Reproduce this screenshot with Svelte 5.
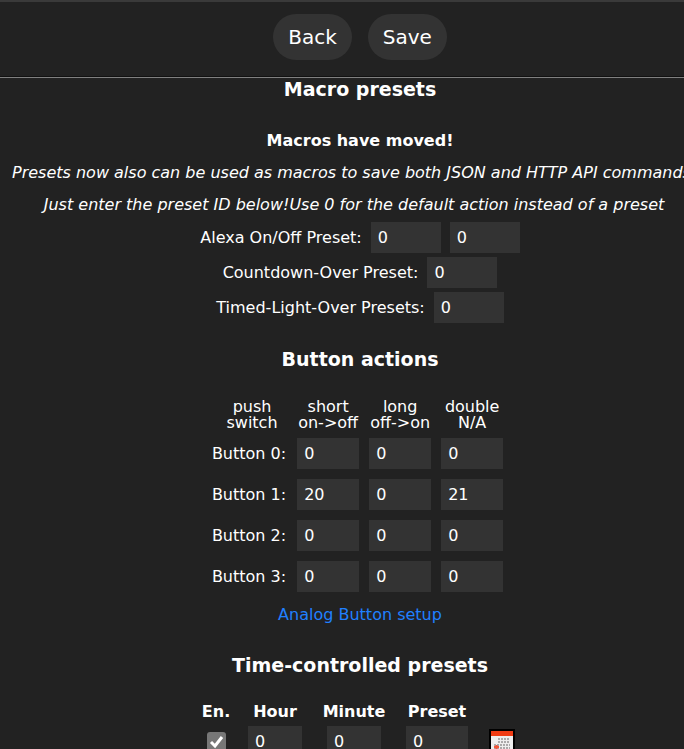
<script lang="ts">
  let alexaOn = $state('0');
  let alexaOff = $state('0');
  let countdown = $state('0');
  let timedLight = $state('0');

  let buttons = $state([
    ['0', '0', '0'],
    ['20', '0', '21'],
    ['0', '0', '0'],
    ['0', '0', '0']
  ]);
  const actions = ['short', 'long', 'double'];

  let timer = $state({ enabled: true, hour: '0', minute: '0', preset: '0' });
</script>

<div class="page">
  <main>
    <div class="toolbar">
      <button type="button">Back</button>
      <button type="button">Save</button>
    </div>

    <h2 class="first">Macro presets</h2>
    <p><b>Macros have moved!</b></p>
    <p class="note"><i>Presets now also can be used as macros to save both JSON and HTTP API commands.</i></p>
    <p class="note"><i>Just enter the preset ID below!</i><i>Use 0 for the default action instead of a preset</i></p>

    <div class="fields">
      <div class="field">
        <label for="alexa-on">Alexa On/Off Preset:</label>
        <input id="alexa-on" type="text" inputmode="numeric" bind:value={alexaOn} />
        <input type="text" inputmode="numeric" aria-label="Alexa Off preset" bind:value={alexaOff} />
      </div>
      <div class="field">
        <label for="countdown">Countdown-Over Preset:</label>
        <input id="countdown" type="text" inputmode="numeric" bind:value={countdown} />
      </div>
      <div class="field">
        <label for="timed-light">Timed-Light-Over Presets:</label>
        <input id="timed-light" type="text" inputmode="numeric" bind:value={timedLight} />
      </div>
    </div>

    <h2>Button actions</h2>
    <table class="buttons">
      <thead>
        <tr>
          <th>push<br />switch</th>
          <th>short<br />on-&gt;off</th>
          <th>long<br />off-&gt;on</th>
          <th>double<br />N/A</th>
        </tr>
      </thead>
      <tbody>
        {#each buttons as row, i}
          <tr>
            <td class="name">Button {i}:</td>
            {#each row as _, j}
              <td>
                <input
                  type="text"
                  inputmode="numeric"
                  aria-label="Button {i} {actions[j]}"
                  bind:value={buttons[i][j]}
                />
              </td>
            {/each}
          </tr>
        {/each}
      </tbody>
    </table>
    <a href="#analog">Analog Button setup</a>

    <h2>Time-controlled presets</h2>
    <table class="timers">
      <thead>
        <tr>
          <th class="enabled">En.</th>
          <th class="time">Hour</th>
          <th class="time">Minute</th>
          <th class="preset">Preset</th>
          <td class="days"></td>
        </tr>
      </thead>
      <tbody>
        <tr>
          <td><input type="checkbox" aria-label="Enabled" bind:checked={timer.enabled} /></td>
          <td><input class="small" type="text" inputmode="numeric" aria-label="Hour" bind:value={timer.hour} /></td>
          <td><input class="small" type="text" inputmode="numeric" aria-label="Minute" bind:value={timer.minute} /></td>
          <td><input type="text" inputmode="numeric" aria-label="Preset" bind:value={timer.preset} /></td>
          <td>
            <button type="button" class="calendar" aria-label="Select days">
              <svg width="26" height="26" viewBox="0 0 26 26">
                <rect width="26" height="26" fill="#000" />
                <rect x="2" y="2" width="22" height="22" fill="#eee" />
                <rect x="2" y="2" width="22" height="5" fill="#f03c14" />
                <path
                  d="M9 10h12M9 13h12M5 16h16M5 19h16"
                  stroke="#aaa"
                  stroke-width="2"
                  stroke-dasharray="2 1"
                />
                <path d="M5 18h5M7.500 16v4" stroke="#f0553a" stroke-width="2" />
              </svg>
            </button>
          </td>
        </tr>
      </tbody>
    </table>
  </main>
</div>

<style>
  :global(body) {
    background: #222;
  }

  .page {
    height: 100vh;
    overflow: hidden;
    box-sizing: border-box;
    border-top: 2px solid #3a3a3a;
    background: #222;
    color: #fff;
    font: 16px/16px Verdana, "DejaVu Sans", sans-serif;
  }

  main {
    width: max-content;
    min-width: 100%;
    box-sizing: border-box;
    display: flex;
    flex-direction: column;
    align-items: center;
  }

  .toolbar {
    align-self: stretch;
    display: flex;
    justify-content: center;
    gap: 16px;
    padding: 12px 0 17px;
    border-bottom: 1px solid #808080;
    box-shadow: inset 0 -1px #111;
  }

  button {
    font-family: inherit;
    color: #fff;
    border: 0;
    cursor: pointer;
  }

  .toolbar button {
    height: 46px;
    padding: 0 15px;
    font-size: 20px;
    background: #333;
    border-radius: 23px;
  }

  h2 {
    margin: 26px 0 29px;
    font-size: 19px;
    line-height: 20px;
  }

  h2.first {
    margin: 1px 0 34px;
  }

  p {
    margin: 0 0 16px;
    white-space: nowrap;
  }

  .note {
    margin: 0 24px 16px 12px;
  }

  .fields {
    display: flex;
    flex-direction: column;
    align-items: center;
    gap: 4px;
    margin-top: -7px;
  }

  .field {
    display: flex;
    align-items: center;
    gap: 9px;
  }

  input[type="text"] {
    display: block;
    box-sizing: border-box;
    width: 62px;
    height: 31px;
    padding: 0 7px;
    border: 0;
    background: #333;
    color: #fff;
    font: inherit;
  }

  .field input[type="text"] {
    width: 70px;
  }

  input.small[type="text"] {
    width: 54px;
  }

  table {
    border-collapse: collapse;
  }

  th,
  td {
    padding: 0;
    text-align: center;
  }

  .buttons th {
    font-weight: normal;
    padding: 1px 0 2px;
  }

  .buttons td {
    padding: 5px;
  }

  .buttons .name {
    text-align: left;
    padding-left: 0;
    padding-right: 6px;
  }

  a {
    margin: 10px 0 6px;
    color: #2080ff;
    text-decoration: none;
  }

  .timers th {
    padding-bottom: 6px;
  }

  .enabled {
    width: 39px;
  }

  .time {
    width: 79px;
  }

  .preset {
    width: 87px;
  }

  .days {
    width: 43px;
  }

  .timers input[type="text"] {
    margin: 0 auto;
  }

  input[type="checkbox"] {
    appearance: none;
    display: block;
    width: 19px;
    height: 19px;
    margin: 0 auto;
    border-radius: 3px;
    background: #777;
  }

  input[type="checkbox"]:checked {
    background: #777
      url("data:image/svg+xml,%3Csvg xmlns='http://www.w3.org/2000/svg' viewBox='0 0 19 19'%3E%3Cpath d='M4 10l4 4 7-9' fill='none' stroke='white' stroke-width='3'/%3E%3C/svg%3E");
  }

  .calendar {
    display: block;
    margin: 0 auto;
    padding: 0;
    background: none;
  }

  .calendar svg {
    display: block;
  }
</style>
